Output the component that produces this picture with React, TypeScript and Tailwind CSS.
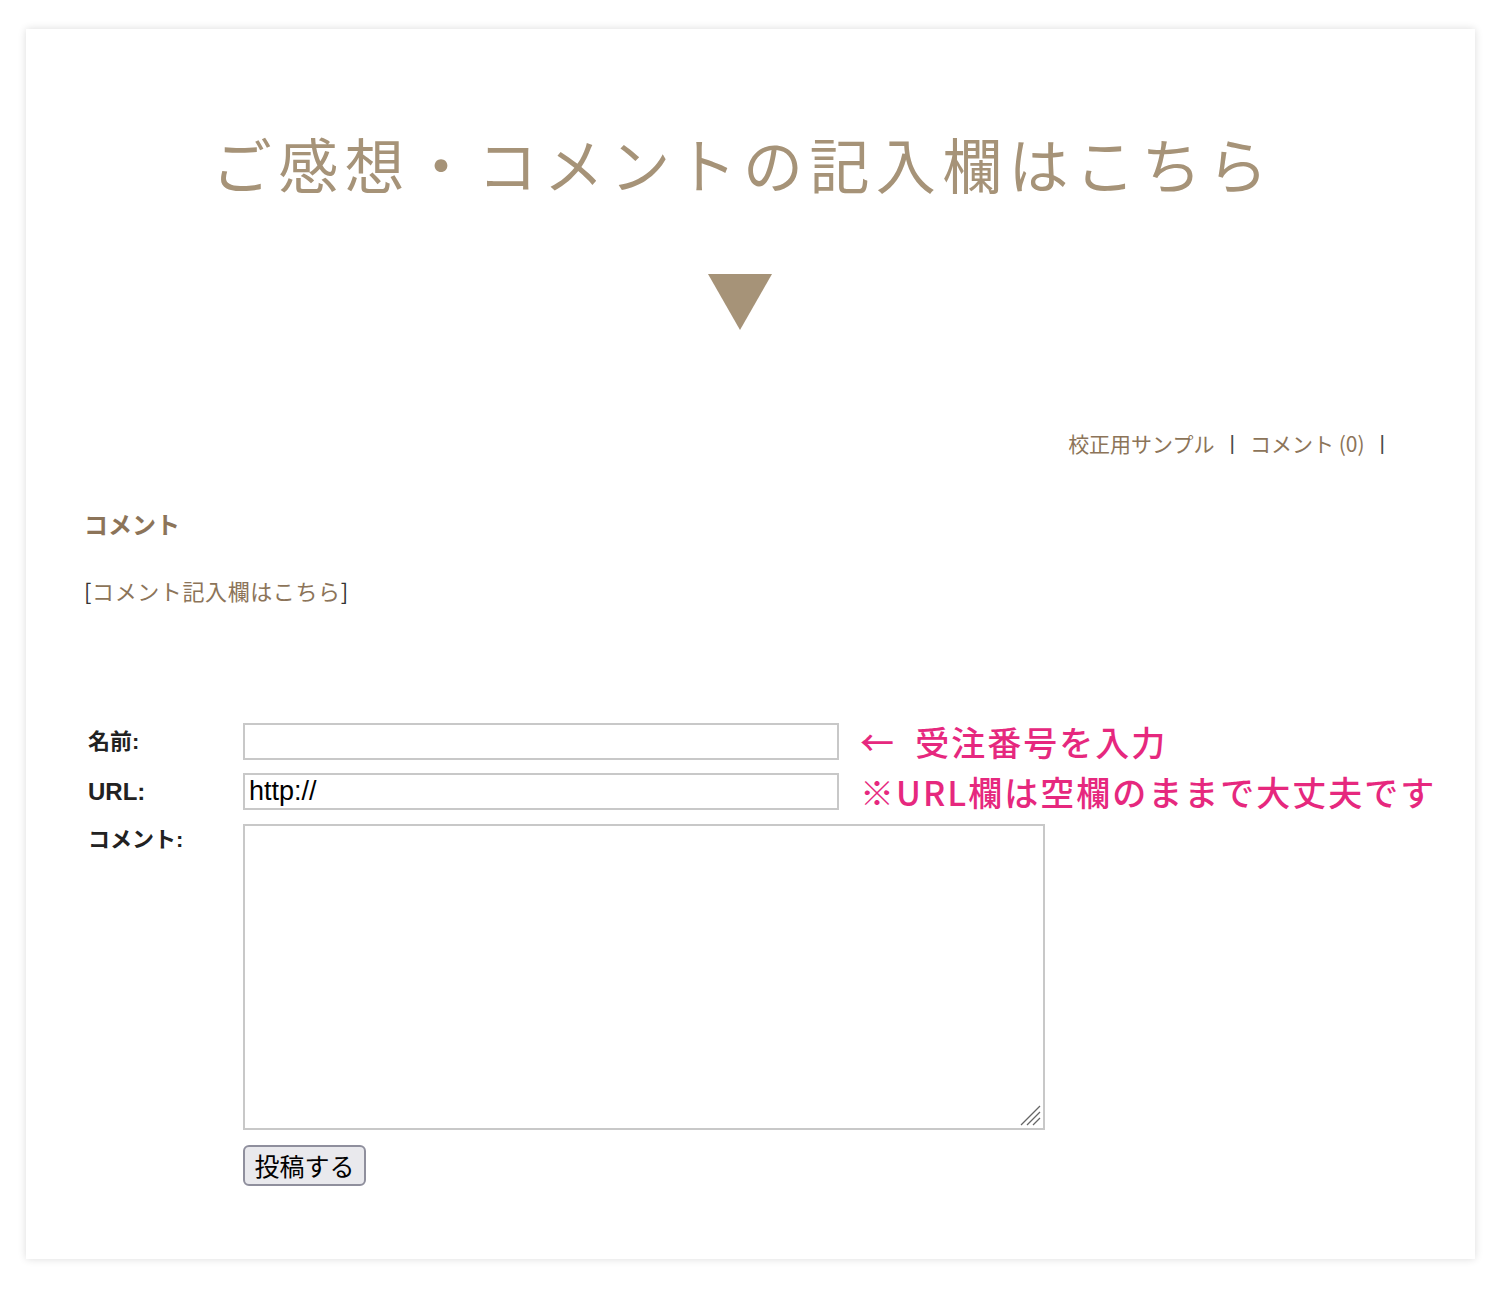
import React from "react";

const jp = "font-['Noto_Sans_CJK_JP','Noto_Sans',sans-serif]";
const lab = "font-['Liberation_Sans','Noto_Sans_CJK_JP',sans-serif]";

export default function App() {
  return (
    <div className="min-h-[1293px] w-[1500px] bg-white pt-[29px]">
      <div className={`ml-[26px] h-[1230px] w-[1449px] bg-white shadow-[0_0_8px_rgba(0,0,0,0.14)] pl-[58px] pr-[79px] ${jp}`}>
        <div className="pt-[104px] pl-[6px] text-center text-[60px] leading-[60px] tracking-[6.4px] text-[#a69378] font-normal whitespace-nowrap">
          ご感想・コメントの記入欄はこちら
        </div>
        <div className="mt-[81px] flex justify-center">
          <svg width="64" height="56" viewBox="0 0 64 56">
            <polygon points="0,0 64,0 32,56" fill="#a69378" />
          </svg>
        </div>
        <div className="mt-[99px] flex justify-end pr-[11px] text-[21px] leading-[28px] whitespace-nowrap">
          <span className="text-[#8c7459]">校正用サンプル</span>
          <span className={`mx-[15px] text-[#4a4a4a] ${lab}`}>|</span>
          <span className="text-[#8c7459]">コメント (0)</span>
          <span className={`ml-[15px] text-[#4a4a4a] ${lab}`}>|</span>
        </div>
        <div className="mt-[52px] text-[24px] leading-[30px] font-bold text-[#8c7459]">コメント</div>
        <div className="mt-[36px] text-[22px] leading-[30px] tracking-[0.6px] text-[#333]">
          [<span className="text-[#8c7459]">コメント記入欄はこちら</span>]
        </div>

        <div className="mt-[118px] pl-[4px]">
          <div className="flex h-[37px] items-center">
            <div className={`w-[155px] shrink-0 text-[22px] font-bold text-[#222] ${lab}`}>名前:</div>
            <div className="h-[37px] w-[596px] shrink-0 border-2 border-[#c8c8c8] bg-white"></div>
            <div className="ml-[21px] whitespace-nowrap text-[34px] leading-[37px] tracking-[2px] font-medium text-[#e6287e]">
              ←&nbsp;&nbsp;受注番号を入力
            </div>
          </div>
          <div className="mt-[13px] flex h-[37px] items-center">
            <div className={`w-[155px] shrink-0 text-[24px] font-bold text-[#222] ${lab}`}>URL:</div>
            <div className={`flex h-[37px] w-[596px] shrink-0 items-center border-2 border-[#c8c8c8] bg-white pl-[4px] text-[27px] leading-[33px] text-black ${lab}`}>
              http://
            </div>
            <div className="ml-[21px] whitespace-nowrap text-[34px] leading-[37px] tracking-[2px] font-medium text-[#e6287e]">
              ※URL欄は空欄のままで大丈夫です
            </div>
          </div>
          <div className="mt-[14px] flex items-start">
            <div className={`w-[155px] shrink-0 pt-[1px] text-[22px] leading-[30px] font-bold text-[#222] ${lab}`}>コメント:</div>
            <div className="relative h-[306px] w-[802px] shrink-0 border-2 border-[#c8c8c8] bg-white">
              <svg className="absolute bottom-[2px] right-[2px]" width="24" height="24" viewBox="0 0 24 24">
                <line x1="23" y1="4" x2="4" y2="23" stroke="#666" strokeWidth="1.2" />
                <line x1="23" y1="10" x2="10" y2="23" stroke="#666" strokeWidth="1.2" />
                <line x1="23" y1="16" x2="16" y2="23" stroke="#666" strokeWidth="1.2" />
              </svg>
            </div>
          </div>
          <div className="mt-[15px] pl-[155px]">
            <div className="flex h-[41px] w-[123px] items-center justify-center rounded-[6px] border-2 border-[#8f8f9d] bg-[#e9e9ed] text-[25px] text-black">
              投稿する
            </div>
          </div>
        </div>
      </div>
    </div>
  );
}
